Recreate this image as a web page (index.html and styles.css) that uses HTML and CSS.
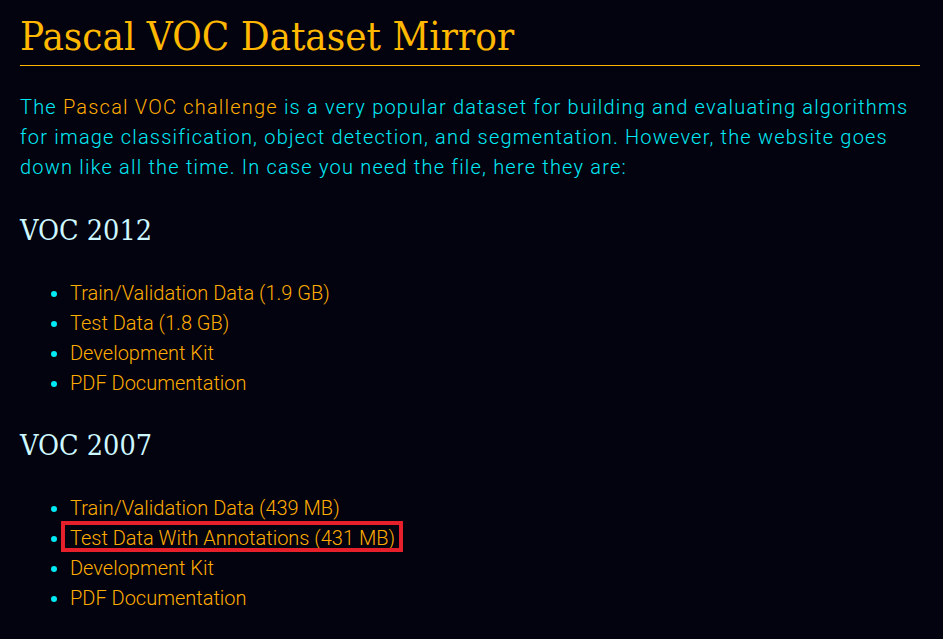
FILE: index.html
```html
<!DOCTYPE html>
<html>
<head>
<meta charset="utf-8">
<title>Pascal VOC Dataset Mirror</title>
<link rel="stylesheet" href="styles.css">
</head>
<body>
<h1 class="title">Pascal VOC Dataset Mirror</h1>
<p class="intro">The <a class="link" href="#">Pascal VOC challenge</a> is a very popular dataset for building and evaluating algorithms for image classification, object detection, and segmentation. However, the website goes down like all the time. In case you need the file, here they are:</p>
<h2 class="section">VOC 2012</h2>
<ul class="files">
  <li><a class="link" href="#">Train/Validation Data (1.9 GB)</a></li>
  <li><a class="link" href="#">Test Data (1.8 GB)</a></li>
  <li><a class="link" href="#">Development Kit</a></li>
  <li><a class="link" href="#">PDF Documentation</a></li>
</ul>
<h2 class="section">VOC 2007</h2>
<ul class="files">
  <li><a class="link" href="#">Train/Validation Data (439 MB)</a></li>
  <li><a class="link highlight" href="#">Test Data With Annotations (431 MB)</a></li>
  <li><a class="link" href="#">Development Kit</a></li>
  <li><a class="link" href="#">PDF Documentation</a></li>
</ul>
</body>
</html>
```
FILE: styles.css
```css
html, body {
  background: #03020f;
}
body {
  margin: 0;
  padding: 0 23px 0 20px;
  font-family: Roboto, "Liberation Sans", sans-serif;
  font-weight: 300;
  color: #00eaf5;
}
.title {
  margin: 10px 0 0;
  padding-bottom: 3px;
  font-family: "DejaVu Serif Condensed", "DejaVu Serif", "Liberation Serif", serif;
  font-stretch: condensed;
  font-weight: normal;
  font-size: 40px;
  line-height: 52px;
  color: #ffb800;
  border-bottom: 1px solid #ffb400;
}
.intro {
  margin: 26px 0 0;
  font-size: 20px;
  line-height: 30px;
  letter-spacing: 1.2px;
}
.link {
  color: #ffad00;
  text-decoration: none;
}
.section {
  margin: 29px 0 0;
  font-family: "DejaVu Serif Condensed", "DejaVu Serif", "Liberation Serif", serif;
  font-stretch: condensed;
  font-weight: normal;
  font-size: 28.5px;
  line-height: 40px;
  color: #cdf8ff;
}
.files {
  margin: 27px 0 0;
  padding-left: 50px;
  font-size: 20px;
  line-height: 30px;
  color: #00eaf5;
}
.section + .files {
  margin-top: 27px;
}
.files + .section {
  margin-top: 28px;
}
.highlight {
  position: relative;
}
.highlight::after {
  content: "";
  position: absolute;
  left: -9px;
  right: -8px;
  top: -5px;
  bottom: -2px;
  border: 4px solid #e5202a;
}
```
